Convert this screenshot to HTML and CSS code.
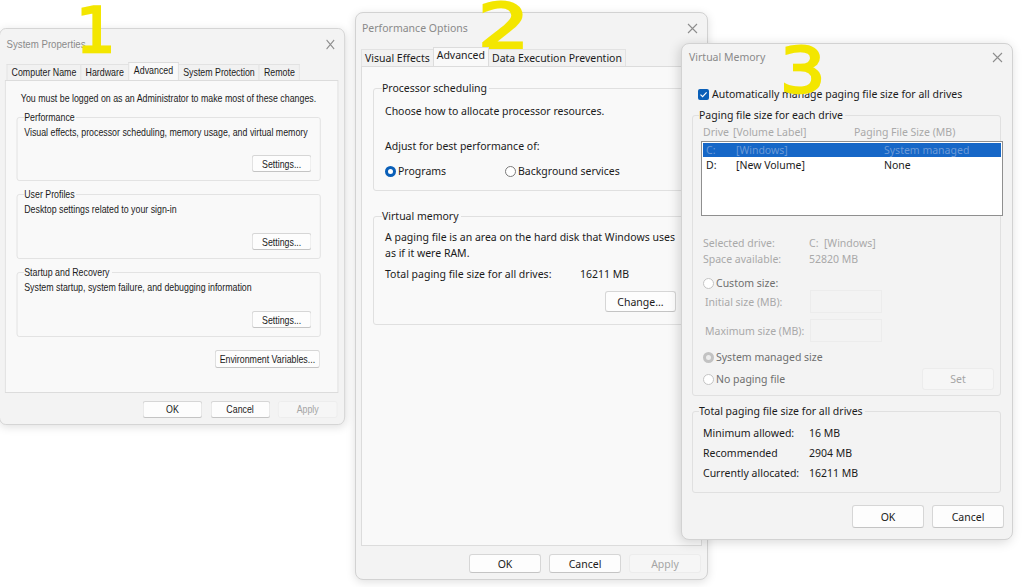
FILE: index.html
```html
<!DOCTYPE html>
<html>
    <head>
        <meta charset="utf-8">
        <title>Virtual memory settings</title>
        <link rel="stylesheet" href="styles.css">
    </head>
    <body>
        <div class="desk">

            <!-- 1 : System Properties -->
            <div class="win sys">
                <div class="titlebar">
                    <span class="title">System Properties</span>
                    <svg class="close" width="11" height="11" viewBox="0 0 11 11"><path d="M1 1L10 10M10 1L1 10" stroke="#8d8d8d" stroke-width="1.1"/></svg>
                </div>
                <div class="tabs">
                    <span class="tab">Computer Name</span>
                    <span class="tab">Hardware</span>
                    <span class="tab on">Advanced</span>
                    <span class="tab">System Protection</span>
                    <span class="tab">Remote</span>
                </div>
                <div class="panel">
                    <p class="note">You must be logged on as an Administrator to make most of these changes.</p>
                    <fieldset class="grp g1">
                        <legend>Performance</legend>
                        <p>Visual effects, processor scheduling, memory usage, and virtual memory</p>
                        <div class="btnrow"><button class="btn">Settings...</button></div>
                    </fieldset>
                    <fieldset class="grp g2">
                        <legend>User Profiles</legend>
                        <p>Desktop settings related to your sign-in</p>
                        <div class="btnrow"><button class="btn">Settings...</button></div>
                    </fieldset>
                    <fieldset class="grp g3">
                        <legend>Startup and Recovery</legend>
                        <p>System startup, system failure, and debugging information</p>
                        <div class="btnrow"><button class="btn">Settings...</button></div>
                    </fieldset>
                    <div class="btnrow env"><button class="btn">Environment Variables...</button></div>
                </div>
                <div class="footer">
                    <button class="btn">OK</button>
                    <button class="btn">Cancel</button>
                    <button class="btn off">Apply</button>
                </div>
            </div>

            <!-- 2 : Performance Options -->
            <div class="win perf">
                <div class="titlebar">
                    <span class="title">Performance Options</span>
                    <svg class="close" width="11" height="11" viewBox="0 0 11 11"><path d="M1 1L10 10M10 1L1 10" stroke="#8d8d8d" stroke-width="1.1"/></svg>
                </div>
                <div class="tabs">
                    <span class="tab">Visual Effects</span>
                    <span class="tab on">Advanced</span>
                    <span class="tab">Data Execution Prevention</span>
                </div>
                <div class="panel">
                    <fieldset class="grp sched">
                        <legend>Processor scheduling</legend>
                        <p class="l1">Choose how to allocate processor resources.</p>
                        <p class="l2">Adjust for best performance of:</p>
                        <div class="radios">
                            <span class="opt"><i class="radio sel"></i>Programs</span>
                            <span class="opt"><i class="radio"></i>Background services</span>
                        </div>
                    </fieldset>
                    <fieldset class="grp vm">
                        <legend>Virtual memory</legend>
                        <p class="l1">A paging file is an area on the hard disk that Windows uses<br>as if it were RAM.</p>
                        <div class="total"><span class="lab">Total paging file size for all drives:</span><span>16211 MB</span></div>
                        <div class="btnrow"><button class="btn">Change...</button></div>
                    </fieldset>
                </div>
                <div class="footer">
                    <button class="btn">OK</button>
                    <button class="btn">Cancel</button>
                    <button class="btn off">Apply</button>
                </div>
            </div>

            <!-- 3 : Virtual Memory -->
            <div class="win vmem">
                <div class="titlebar">
                    <span class="title">Virtual Memory</span>
                    <svg class="close" width="11" height="11" viewBox="0 0 11 11"><path d="M1 1L10 10M10 1L1 10" stroke="#8d8d8d" stroke-width="1.1"/></svg>
                </div>
                <div class="auto">
                    <span class="check"><svg width="9" height="9" viewBox="0 0 9 9"><path d="M1.5 4.6L3.6 6.6L7.6 2.4" fill="none" stroke="#fff" stroke-width="1.2"/></svg></span>
                    Automatically manage paging file size for all drives
                </div>
                <fieldset class="grp each">
                    <legend>Paging file size for each drive</legend>
                    <div class="cols dim"><span class="c1">Drive</span><span class="c2">[Volume Label]</span><span>Paging File Size (MB)</span></div>
                    <div class="list">
                        <div class="item picked"><span class="c1">C:</span><span class="c2">[Windows]</span><span>System managed</span></div>
                        <div class="item"><span class="c1">D:</span><span class="c2">[New Volume]</span><span>None</span></div>
                    </div>
                    <div class="info dim">
                        <div><span class="k">Selected drive:</span>C:&nbsp; [Windows]</div>
                        <div><span class="k">Space available:</span>52820 MB</div>
                    </div>
                    <div class="ropt custom"><i class="radio off"></i>Custom size:</div>
                    <div class="field f1 dim"><span class="k">Initial size (MB):</span><span class="box"></span></div>
                    <div class="field f2 dim"><span class="k">Maximum size (MB):</span><span class="box"></span></div>
                    <div class="ropt sysman"><i class="radio offsel"></i>System managed size</div>
                    <div class="ropt nopage"><span><i class="radio off"></i>No paging file</span><button class="btn off set">Set</button></div>
                </fieldset>
                <fieldset class="grp sum">
                    <legend>Total paging file size for all drives</legend>
                    <div class="srow"><span class="k">Minimum allowed:</span>16 MB</div>
                    <div class="srow"><span class="k">Recommended</span>2904 MB</div>
                    <div class="srow"><span class="k">Currently allocated:</span>16211 MB</div>
                </fieldset>
                <div class="footer">
                    <button class="btn">OK</button>
                    <button class="btn">Cancel</button>
                </div>
            </div>

            <!-- hand-written numbers on top -->
            <span class="mark m1">1</span>
            <span class="mark m2">2</span>
            <span class="mark m3">3</span>
        </div>
    </body>
</html>
```

FILE: styles.css
```css
* {
    box-sizing: border-box;
}
body {
    margin: 0;
    background: #fff;
}
p {
    margin: 0;
}
.desk {
    position: relative;
    width: 1024px;
    height: 587px;
    overflow: hidden;
    background: #fff;
}

/* window frame */
.win {
    position: absolute;
    display: flex;
    flex-direction: column;
    background: #f3f3f3;
    border: 1px solid #d2d2d2;
    border-radius: 8px;
    box-shadow: 0 2px 10px rgba(0, 0, 0, 0.13);
    font-family: "Noto Sans", "Open Sans", sans-serif;
    color: #1b1b1b;
}
.titlebar {
    display: flex;
    align-items: center;
    justify-content: space-between;
    height: 30px;
    padding: 0 9px 0 6px;
    flex: none;
}
.title {
    color: #8a8a8a;
}
.close {
    display: block;
}
.tabs {
    display: flex;
    align-items: flex-end;
    position: relative;
    z-index: 1;
    margin-bottom: -1px;
    flex: none;
}
.tab {
    border: 1px solid #e2e2e2;
    border-bottom: none;
    background: #f1f1f1;
    margin-right: -1px;
    white-space: nowrap;
}
.tab.on {
    background: #f9f9f9;
    border-color: #dcdcdc;
    position: relative;
    z-index: 2;
}
.panel {
    background: #f9f9f9;
    border: 1px solid #dcdcdc;
    flex: none;
}
.grp {
    border: 1px solid #e0e0e0;
    border-radius: 3px;
    margin: 0;
    min-width: 0;
}
.grp legend {
    padding: 0 2px 0 0;
}
.btnrow {
    display: flex;
    justify-content: flex-end;
}
.btn {
    font: inherit;
    color: #1b1b1b;
    background: #fdfdfd;
    border: 1px solid #d6d6d6;
    border-bottom-color: #c4c4c4;
    border-radius: 3px;
    padding: 0;
    white-space: nowrap;
}
.btn.off {
    color: #a5a5a5;
    background: #f6f6f6;
    border-color: #ececec;
}
.footer {
    display: flex;
    justify-content: flex-end;
    flex: none;
}
.radio {
    display: inline-block;
    width: 11px;
    height: 11px;
    border-radius: 50%;
    border: 1px solid #7a7a7a;
    background: #fff;
    margin-right: 2px;
    vertical-align: -2px;
}
.radio.sel {
    border: 3px solid #0a5fb8;
    background: #fff;
}
.radio.off {
    border-color: #c4c4c4;
}
.radio.offsel {
    border: 3px solid #c2c2c2;
    background: #ececec;
}

/* 1 - system properties: the old dialog font is narrow, so the
   whole window is drawn wider and squeezed back horizontally */
.sys {
    left: -1px;
    top: 28px;
    width: 412px;
    height: 397px;
    transform: scaleX(0.84);
    transform-origin: 0 0;
    font-family: "Liberation Sans", sans-serif;
    font-size: 10.5px;
    line-height: 12px;
    white-space: nowrap;
}
.sys .title {
    font-size: 11.5px;
}
.sys .titlebar {
    padding: 0 11px 0 8px;
}
.sys .tabs {
    margin: 3px 0 0 8px;
    height: 18px;
}
.sys .tab {
    height: 16px;
    line-height: 15px;
    padding: 0 5px;
}
.sys .tab.on {
    height: 18px;
    line-height: 14px;
    padding: 0 6px;
}
.sys .panel {
    margin: 0 7px 0 6px;
    height: 313px;
    padding: 11px 20px 0 13px;
}
.sys .note {
    padding-left: 5px;
}
.sys .grp {
    padding: 3px 10px 8px 8px;
}
.sys .grp p {
    margin-bottom: 18px;
}
.sys .g1 {
    margin-top: 7px;
}
.sys .g1 p {
    margin-bottom: 17px;
}
.sys .g2 {
    margin-top: 7px;
}
.sys .g3 {
    margin-top: 7px;
}
.sys .grp .btn {
    width: 71px;
    height: 17px;
}
.sys .env {
    margin-top: 13px;
    padding-right: 1px;
}
.sys .env .btn {
    width: 125px;
    height: 18px;
}
.sys .footer {
    height: 32px;
    align-items: center;
    gap: 9.5px;
    padding: 0 8px 0 0;
}
.sys .footer .btn {
    width: 71px;
    height: 17px;
}

/* 2 - performance options */
.perf {
    left: 355px;
    top: 12px;
    width: 353px;
    height: 568px;
    font-size: 10.5px;
    line-height: 14px;
}
.perf .tabs {
    margin: 4px 0 0 5px;
    height: 19px;
}
.perf .tab {
    height: 17px;
    line-height: 16px;
    padding: 0 3px;
}
.perf .tab.on {
    height: 19px;
    line-height: 15px;
}
.perf .panel {
    margin: 0 5px;
    height: 480px;
    padding: 14px 11px 0 11px;
}
.perf .grp {
    padding: 0 13px 12px 8px;
}
.perf .l1,
.perf .l2,
.perf .radios,
.perf .total {
    padding-left: 3px;
    white-space: nowrap;
}
.perf .sched .l1 {
    margin-top: 9px;
}
.perf .l2 {
    margin-top: 21px;
}
.perf .radios {
    display: flex;
    margin-top: 11px;
}
.perf .opt {
    width: 120px;
}
.perf .vm {
    margin-top: 18px;
}
.perf .vm .l1 {
    margin-top: 7px;
    line-height: 15.5px;
}
.perf .total {
    display: flex;
    margin-top: 6px;
}
.perf .total .lab {
    width: 195px;
}
.perf .vm .btnrow {
    margin-top: 10px;
}
.perf .vm .btn {
    width: 71px;
    height: 21px;
}
.perf .footer {
    padding: 8px 6px 0 0;
    gap: 8px;
}
.perf .footer .btn {
    width: 72px;
    height: 19px;
}

/* 3 - virtual memory */
.vmem {
    left: 681px;
    top: 43px;
    width: 332px;
    height: 497px;
    font-size: 10.5px;
    line-height: 12px;
    box-shadow: -2px 2px 12px rgba(0, 0, 0, 0.16);
}
.vmem .titlebar {
    height: 26px;
    padding-left: 7px;
}
.vmem .auto {
    margin: 18px 0 0 16px;
    display: flex;
    align-items: center;
    white-space: nowrap;
}
.check {
    display: inline-flex;
    align-items: center;
    justify-content: center;
    width: 11px;
    height: 11px;
    border-radius: 2px;
    background: #0a5fb8;
    margin-right: 3px;
}
.vmem .grp {
    margin: 0 11px 0 10px;
    white-space: nowrap;
}
.dim {
    color: #a9a9a9;
}
.vmem .each {
    margin-top: 9px;
    padding: 0 0 5px 6px;
}
.vmem .cols {
    display: flex;
    margin-top: 5px;
    padding-left: 4px;
}
.c1 {
    width: 30px;
}
.c2 {
    width: 121px;
}
.list {
    margin: 3px 0 0 2px;
    width: 302px;
    height: 75px;
    background: #fff;
    border: 1px solid #8f8f8f;
    padding: 1px;
}
.item {
    display: flex;
    height: 14px;
    line-height: 14px;
    padding-left: 3px;
    margin-bottom: 1px;
}
.item .c2 {
    width: 148px;
}
.item.picked {
    background: #1667c7;
    color: #6d9ad6;
}
.info {
    margin-top: 19px;
    padding-left: 4px;
    line-height: 16px;
}
.k {
    display: inline-block;
    width: 106px;
}
.ropt {
    color: #6f6f6f;
    padding-left: 4px;
}
.custom {
    margin-top: 10px;
}
.field {
    display: flex;
    align-items: center;
    padding-left: 6px;
    height: 23px;
}
.field .k {
    width: 105px;
}
.field .box {
    width: 72px;
    height: 23px;
    border: 1px solid #ececec;
    background: #f3f3f3;
}
.f1 {
    margin-top: 1px;
}
.f2 {
    margin-top: 6px;
}
.sysman {
    margin-top: 9px;
}
.nopage {
    display: flex;
    align-items: center;
    justify-content: space-between;
    margin-top: 5px;
    padding-right: 6px;
    height: 22px;
}
.nopage .set {
    width: 72px;
    height: 22px;
}
.vmem .sum {
    margin-top: 9px;
    padding: 0 0 9px 6px;
}
.srow {
    line-height: 20px;
    padding-left: 4px;
}
.srow:first-of-type {
    margin-top: 6px;
}
.vmem .footer {
    margin-top: 12px;
    gap: 8px;
    padding-right: 8px;
}
.vmem .footer .btn {
    width: 72px;
    height: 23px;
}

/* yellow marker numbers */
.mark {
    position: absolute;
    font-family: "DejaVu Sans", sans-serif;
    font-size: 62px;
    line-height: 62px;
    color: #f3e600;
    -webkit-text-stroke: 2.5px #f3e600;
    transform-origin: 0 0;
}
.m1 {
    left: 76px;
    top: 0;
}
.m2 {
    left: 478px;
    top: -4px;
    transform: scaleX(1.3);
}
.m3 {
    left: 780px;
    top: 40px;
    transform: scaleX(1.15);
}
```
